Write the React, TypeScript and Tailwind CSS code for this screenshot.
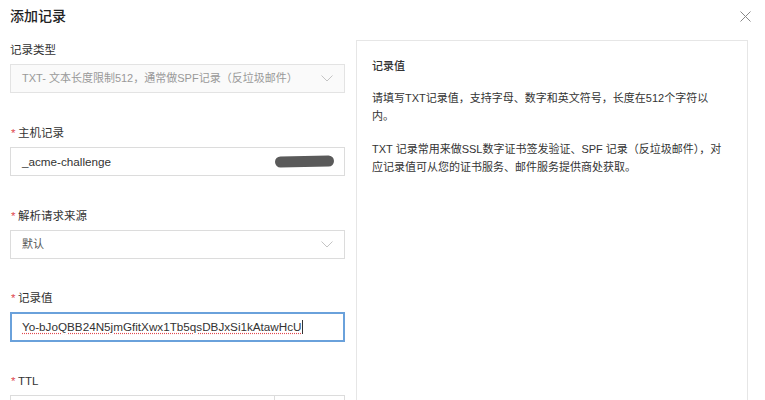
import React from 'react';

const font = {
  fontFamily: '"Liberation Sans", "Noto Sans CJK SC", sans-serif',
};

const Chevron = () => (
  <svg width="12" height="7" viewBox="0 0 12 7" className="shrink-0">
    <path d="M0.5 0.5 L6 6 L11.5 0.5" fill="none" stroke="#c4c4c4" strokeWidth="1" />
  </svg>
);

const Label: React.FC<{ text: string; required?: boolean }> = ({ text, required }) => (
  <div className="h-[16px] flex items-center text-[11.5px] leading-[16px] text-[#333] mb-[6px]">
    {required && <span className="text-[#e0484f] w-[8px] pl-[1px]">*</span>}
    <span>{text}</span>
  </div>
);

export default function App() {
  return (
    <div className="w-[765px] h-[400px] overflow-hidden bg-white px-[10px]" style={font}>
      <div className="h-[32px] flex items-center justify-between">
        <h2 className="text-[14px] font-medium text-[#222]">添加记录</h2>
        <svg width="11" height="11" viewBox="0 0 11 11" className="mr-[4px]">
          <path d="M0.5 0.5 L10.5 10.5 M10.5 0.5 L0.5 10.5" stroke="#888" strokeWidth="1" />
        </svg>
      </div>

      <div className="flex gap-[11px] mt-[8px]">
        <div className="w-[335px] shrink-0 pt-[2px]">
          <Label text="记录类型" />
          <div className="h-[29px] border border-[#e3e3e3] bg-[#fafafa] flex items-center justify-between pl-[11px] pr-[11px] text-[11px] text-[#999] mb-[32px]">
            <span>TXT- 文本长度限制512，通常做SPF记录（反垃圾邮件）</span>
            <Chevron />
          </div>

          <Label text="主机记录" required />
          <div className="h-[29px] border border-[#dcdcdc] flex items-center justify-between pl-[11px] pr-[10px] text-[11.7px] text-[#333] mb-[32px]">
            <span>_acme-challenge</span>
            <span className="w-[59px] h-[11px] rounded-full bg-[#5a5a5a] -rotate-1" />
          </div>

          <Label text="解析请求来源" required />
          <div className="h-[29px] border border-[#dcdcdc] flex items-center justify-between pl-[11px] pr-[11px] text-[11px] text-[#555] mb-[31px]">
            <span>默认</span>
            <Chevron />
          </div>

          <Label text="记录值" required />
          <div className="h-[30px] border-2 border-[#6aa1db] flex items-center pl-[10px] text-[11.7px] text-[#333] mb-[31px]">
            <span className="underline decoration-dotted decoration-[#e0484f] underline-offset-2">
              Yo-bJoQBB24N5jmGfitXwx1Tb5qsDBJxSi1kAtawHcU
            </span>
            <span className="w-px h-[14px] bg-[#333]" />
          </div>

          <Label text="TTL" required />
          <div className="h-[29px] border border-[#dcdcdc] flex">
            <div className="w-[264px] border-r border-[#dcdcdc]" />
            <div className="flex-1" />
          </div>
        </div>

        <div className="w-[392px] h-[400px] border border-[#e6e6e6] pl-[15px] pr-[20px] pt-[17px] text-[11px] text-[#333]">
          <div className="leading-[16px] font-medium">记录值</div>
          <p className="leading-[18px] mt-[15px]">
            请填写TXT记录值，支持字母、数字和英文符号，长度在512个字符以
            <br />
            内。
          </p>
          <p className="leading-[18px] mt-[15px]">
            TXT 记录常用来做SSL数字证书签发验证、SPF 记录（反垃圾邮件），对应记录值可从您的证书服务、邮件服务提供商处获取。
          </p>
        </div>
      </div>
    </div>
  );
}
